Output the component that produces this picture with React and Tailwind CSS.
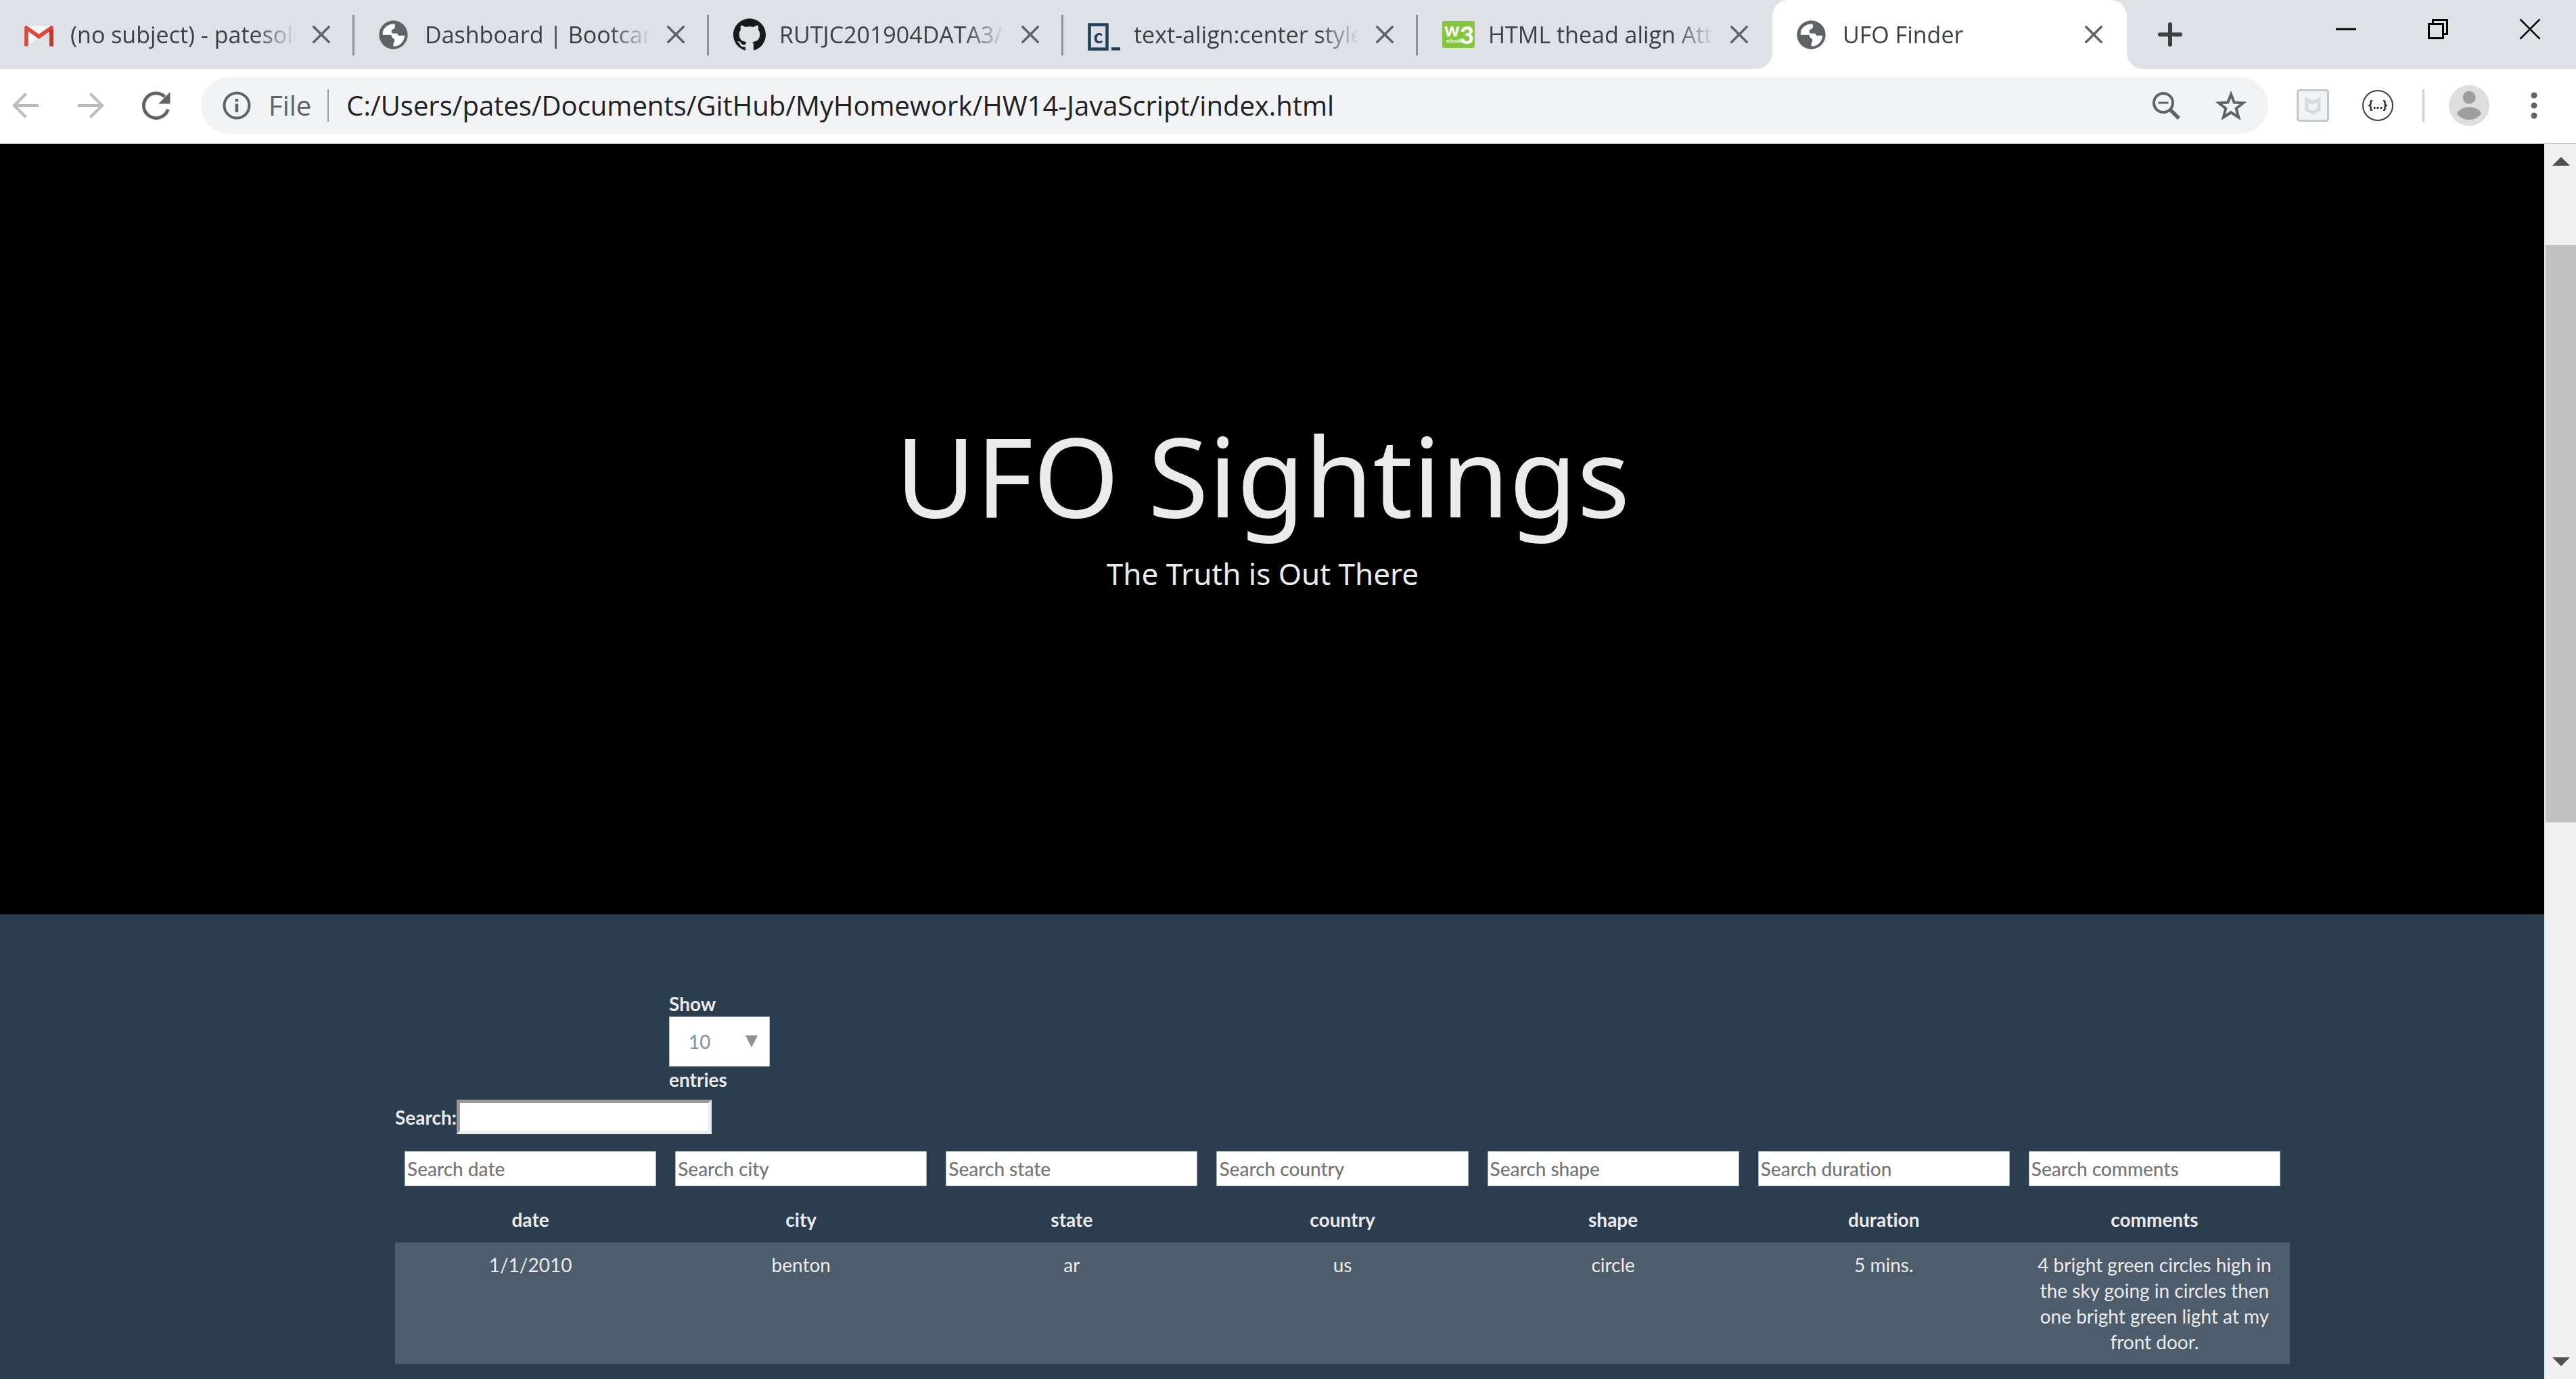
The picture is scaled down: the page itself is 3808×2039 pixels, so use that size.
import { SiGithub } from "react-icons/si";

function GmailIcon() {
  return (
    <svg viewBox="42 36 130 130" className="size-[43px]" aria-hidden="true">
      <rect x="52" y="60" width="110" height="92" rx="6" fill="#f3f4f4" />
      <path d="M58 152 107 112l48 40z" fill="#dfe1e2" />
      <path d="M107 112 160 152V78z" fill="#d3d6d8" opacity=".7" />
      <path d="M51 152V69l56 40 56-40v83" fill="none" stroke="#d9483b" strokeWidth="17" strokeLinejoin="round" />
      <path d="M163 78v74" stroke="#c0392d" strokeWidth="17" />
    </svg>
  );
}

function GlobeIcon() {
  return (
    <svg viewBox="36 39 128 128" className="size-[43px]" aria-hidden="true">
      <circle cx="100" cy="103" r="63" fill="#5f6368" />
      <path
        d="M106 56L108 66Q106 80 92 80L92 90Q92 97 100 97L114 97Q122 98 122 107L150 106Q148 130 130 145Q118 155 100 153L100 139Q106 137 105 132L105 122Q95 120 91 104L53 104Q50 80 70 65Q86 54 106 56Z"
        fill="#fff"
      />
    </svg>
  );
}

function CodecademyIcon() {
  return (
    <svg viewBox="0 0 48 48" className="size-12" aria-hidden="true">
      <rect x="2.5" y="9.500" width="26" height="36" fill="#dcdfe6" stroke="#1f4156" strokeWidth="4.500" />
      <text x="15.500" y="37" textAnchor="middle" fontFamily="Lato" fontWeight="900" fontSize="28" fill="#1f4156">c</text>
      <rect x="35" y="43" width="13" height="4.500" fill="#1f4156" />
    </svg>
  );
}

function W3Icon() {
  return (
    <svg viewBox="0 0 48 48" className="size-12" aria-hidden="true">
      <rect y="4" width="48" height="40" rx="3" fill="#86c63f" />
      <text x="3" y="27" fontFamily="Lato" fontWeight="900" fontSize="28" fill="#fff">w</text>
      <text x="26" y="38" fontFamily="Lato" fontWeight="900" fontSize="36" fill="#fff">3</text>
      <text x="6" y="36" fontFamily="Lato" fontWeight="700" fontSize="7" fill="#fff">schools</text>
    </svg>
  );
}

function Cross({ className, width }) {
  return (
    <svg viewBox="0 0 30 30" className={className} fill="none" stroke="currentColor" strokeWidth={width} aria-hidden="true">
      <path d="M2 2l26 26M28 2L2 28" strokeLinecap="round" />
    </svg>
  );
}

const tabs = [
  { title: "(no subject) - patesolo@gmail.com", icon: <GmailIcon /> },
  { title: "Dashboard | Bootcamp Spot", icon: <GlobeIcon /> },
  { title: "RUTJC201904DATA3/Homework", icon: <SiGithub className="size-12 text-[#171a1d]" /> },
  { title: "text-align:center style", icon: <CodecademyIcon /> },
  { title: "HTML thead align Attribute", icon: <W3Icon /> },
  { title: "UFO Finder", icon: <GlobeIcon />, active: true },
];

function Tab({ tab, divider }) {
  return (
    <div
      className={
        tab.active
          ? "relative flex h-full max-w-[524px] min-w-0 flex-1 items-center rounded-t-3xl bg-white pr-9 pl-9"
          : "relative flex h-full max-w-[524px] min-w-0 flex-1 items-center pr-9 pl-9"
      }
    >
      {tab.active && (
        <>
          <svg viewBox="0 0 24 24" className="absolute bottom-0 -left-6 size-6" aria-hidden="true">
            <path d="M24 0v24H0A24 24 0 0 0 24 0z" fill="#fff" />
          </svg>
          <svg viewBox="0 0 24 24" className="absolute -right-6 bottom-0 size-6" aria-hidden="true">
            <path d="M0 0v24h24A24 24 0 0 1 0 0z" fill="#fff" />
          </svg>
        </>
      )}
      <span className="flex w-12 shrink-0">{tab.icon}</span>
      <a
        href="#page"
        className="ml-5 min-w-0 flex-1 overflow-hidden text-[34px] leading-[48px] whitespace-nowrap text-[#3c4043] [mask-image:linear-gradient(to_right,#000_calc(100%-60px),transparent)]"
      >
        {tab.title}
      </a>
      <button aria-label={`Close ${tab.title}`} className="ml-6 shrink-0 text-[#5f6368]">
        <Cross className="size-[26px]" width="4" />
      </button>
      {divider && <span className="absolute top-[22px] right-0 h-[60px] w-[3px] bg-[#8d9196]" />}
    </div>
  );
}

function TabStrip() {
  return (
    <header className="flex h-[102px] shrink-0 bg-[#dee1e6]">
      <nav aria-label="Tabs" className="flex min-w-0 flex-1">
        {tabs.map((tab, i) => (
          <Tab key={tab.title} tab={tab} divider={i < 4} />
        ))}
        <button aria-label="New tab" className="ml-11 text-[#3c4043]">
          <svg viewBox="0 0 40 40" className="size-10" stroke="currentColor" strokeWidth="6" strokeLinecap="round" aria-hidden="true">
            <path d="M20 5v30M5 20h30" />
          </svg>
        </button>
      </nav>
      <div className="flex h-[86px] shrink-0 text-black">
        <button aria-label="Minimize" className="flex w-[136px] items-center justify-center">
          <svg viewBox="0 0 30 30" className="size-[30px]" aria-hidden="true">
            <path d="M0 15h30" stroke="currentColor" strokeWidth="3" />
          </svg>
        </button>
        <button aria-label="Restore" className="flex w-[136px] items-center justify-center">
          <svg viewBox="0 0 30 30" className="size-[30px]" fill="none" stroke="currentColor" strokeWidth="3" aria-hidden="true">
            <path d="M1.500 7.500h21v21h-21zM7.500 7.500v-6h21v21h-6" />
          </svg>
        </button>
        <button aria-label="Close window" className="flex w-[136px] items-center justify-center">
          <Cross className="size-[32px]" width="2.5" />
        </button>
      </div>
    </header>
  );
}

function Toolbar() {
  return (
    <div className="flex h-[111px] shrink-0 items-center border-b border-[#b4b4b4] bg-white pb-0.5 text-[#5f6368]">
      <div className="flex shrink-0 items-center gap-14 pr-[45px] pl-[18px]">
        <button aria-label="Back" className="text-[#bbbcbe]">
          <svg viewBox="0 0 40 40" className="size-10" fill="none" stroke="currentColor" strokeWidth="4" aria-hidden="true">
            <path d="M39 20H3M20.500 2.500L3 20l17.500 17.500" />
          </svg>
        </button>
        <button aria-label="Forward" className="text-[#bbbcbe]">
          <svg viewBox="0 0 40 40" className="size-10" fill="none" stroke="currentColor" strokeWidth="4" aria-hidden="true">
            <path d="M1 20h36M19.500 2.500L37 20 19.500 37.500" />
          </svg>
        </button>
        <button aria-label="Reload">
          <svg viewBox="0 0 40 40" className="size-[42px]" aria-hidden="true">
            <path d="M36.500 25.500A17.500 17.500 0 1 1 32 7.600" fill="none" stroke="currentColor" strokeWidth="4.500" />
            <path d="M39.500 1v16.500H23z" fill="currentColor" />
          </svg>
        </button>
      </div>
      <div className="flex h-[84px] min-w-0 flex-1 items-center rounded-full bg-[#f1f3f4] pr-8 pl-8 text-[40px] leading-[60px]">
        <svg viewBox="0 0 42 42" className="size-[42px] shrink-0" aria-hidden="true">
          <circle cx="21" cy="21" r="18.500" fill="none" stroke="currentColor" strokeWidth="4" />
          <path d="M21 18.500v12.500M21 11v4.500" stroke="currentColor" strokeWidth="4.500" />
        </svg>
        <span className="ml-[26px]">File</span>
        <span className="ml-6 h-12 w-[2px] shrink-0 bg-[#9aa0a6]" />
        <input
          aria-label="Address"
          defaultValue="C:/Users/pates/Documents/GitHub/MyHomework/HW14-JavaScript/index.html"
          className="ml-[26px] min-w-0 flex-1 bg-transparent text-[#202124] outline-none"
        />
        <button aria-label="Zoom" className="mr-[52px] shrink-0">
          <svg viewBox="0 0 42 42" className="size-[42px]" fill="none" stroke="currentColor" strokeWidth="4" aria-hidden="true">
            <circle cx="17" cy="17" r="14" />
            <path d="M9.500 17h15" strokeWidth="3" />
            <path d="M27 27l13 13" strokeWidth="5.500" />
          </svg>
        </button>
        <button aria-label="Bookmark this page" className="shrink-0">
          <svg viewBox="0 0 46 44" className="h-[44px] w-[46px]" fill="none" stroke="currentColor" strokeWidth="4" aria-hidden="true">
            <path d="M23 5.500l4.700 12 13.300.7-10.300 8.300 3.500 13L23 32.200 11.800 39.500l3.500-13L5 18.200l13.300-.7z" />
          </svg>
        </button>
      </div>
      <div className="flex shrink-0 items-center pr-10 pl-[42px]">
        <button aria-label="McAfee WebAdvisor">
          <svg viewBox="0 0 48 48" className="size-12" aria-hidden="true">
            <rect x="1.500" y="1.500" width="45" height="45" rx="3" fill="#f1f4f6" stroke="#c0c9ce" strokeWidth="3" />
            <path d="M15 15.500l9 4.500 9-4.500v14.500l-9 5-9-5z" fill="none" stroke="#d6dbde" strokeWidth="5" />
          </svg>
        </button>
        <button aria-label="JSON formatter" className="ml-12">
          <svg viewBox="0 0 48 48" className="size-12" aria-hidden="true">
            <circle cx="24" cy="24" r="22" fill="#fff" stroke="#3c3c3c" strokeWidth="2" />
            <text x="24" y="29" textAnchor="middle" fontFamily="Open Sans" fontWeight="700" fontSize="17" fill="#222">{"{...}"}</text>
          </svg>
        </button>
        <span className="ml-[42px] h-12 w-[3px] bg-[#cbcdcf]" />
        <button aria-label="Profile" className="ml-9">
          <svg viewBox="0 0 60 60" className="size-[60px]" aria-hidden="true">
            <circle cx="30" cy="30" r="30" fill="#dedede" />
            <circle cx="30" cy="18" r="9.500" fill="#9e9e9e" />
            <path d="M12 42C15 35 22 32.500 30 32.500S45 35 48 42C44 48 37 51 30 51S16 48 12 42z" fill="#9e9e9e" />
          </svg>
        </button>
        <button aria-label="Menu" className="ml-11">
          <svg viewBox="0 0 44 44" className="size-11" fill="currentColor" aria-hidden="true">
            <circle cx="22" cy="7" r="4.500" />
            <circle cx="22" cy="22" r="4.500" />
            <circle cx="22" cy="37" r="4.500" />
          </svg>
        </button>
      </div>
    </div>
  );
}

const columns = ["date", "city", "state", "country", "shape", "duration", "comments"];
const rows = [
  [
    "1/1/2010",
    "benton",
    "ar",
    "us",
    "circle",
    "5 mins.",
    "4 bright green circles high in the sky going in circles then one bright green light at my front door.",
  ],
];

function Sightings() {
  return (
    <section className="flex-1 bg-[#2b3e50] pt-[113px] pr-94 pl-146 font-['Lato',sans-serif] text-[28px] leading-[38px] [font-variant-ligatures:none]">
      <div className="ml-[405px] flex flex-col items-start font-bold">
        <label htmlFor="length">Show</label>
        <div className="relative">
          <select
            id="length"
            defaultValue="10"
            className="block h-[74px] w-[149px] appearance-none border border-[#b9bec4] bg-white pl-7 font-medium text-[#8b939b]"
          >
            <option>10</option>
            <option>25</option>
            <option>50</option>
            <option>100</option>
          </select>
          <svg viewBox="0 0 18 18" className="pointer-events-none absolute top-7 right-[18px] size-[18px]" aria-hidden="true">
            <path d="M0 0h18L9 18z" fill="#8b939b" />
          </svg>
        </div>
        <label htmlFor="length">entries</label>
      </div>
      <div className="mt-[11px] flex items-center font-bold">
        <label htmlFor="search">Search:</label>
        <input
          id="search"
          type="search"
          className="h-[51px] w-[377px] border-[5px] border-t-[#999] border-r-[#ebeff2] border-b-[#ebeff2] border-l-[#999] bg-white text-[#333] outline-none"
        />
      </div>
      <table className="mt-[11px] w-full table-fixed border-collapse text-center">
        <thead>
          <tr>
            {columns.map((name) => (
              <td key={name} className="p-3.5">
                <input
                  aria-label={`Search ${name}`}
                  placeholder={`Search ${name}`}
                  className="block h-[52px] w-full border border-[#a9b0b6] bg-white px-[3px] font-medium text-[#333] outline-none placeholder:text-[#757575]"
                />
              </td>
            ))}
          </tr>
          <tr>
            {columns.map((name) => (
              <th key={name} scope="col" className="px-3.5 pt-4 pb-[15px] font-bold">
                {name}
              </th>
            ))}
          </tr>
        </thead>
        <tbody>
          {rows.map((row) => (
            <tr key={row[0]} className="bg-[#4e5d6c]">
              {row.map((value, i) => (
                <td key={columns[i]} className="p-3.5 align-top">
                  {value}
                </td>
              ))}
            </tr>
          ))}
        </tbody>
      </table>
    </section>
  );
}

function Scrollbar() {
  return (
    <aside className="flex w-[47px] shrink-0 flex-col bg-[#f0f0f0] pl-0.5">
      <button aria-label="Scroll up" className="flex h-[51px] items-center justify-center">
        <svg viewBox="0 0 26 13" className="h-[13px] w-[26px]" aria-hidden="true">
          <path d="M0 13h26L13 0z" fill="#505050" />
        </svg>
      </button>
      <div className="flex-1 pt-[98px]">
        <div className="h-[52.5%] bg-[#c1c1c1]" />
      </div>
      <button aria-label="Scroll down" className="flex h-[51px] items-center justify-center">
        <svg viewBox="0 0 26 13" className="h-[13px] w-[26px]" aria-hidden="true">
          <path d="M0 0h26L13 13z" fill="#505050" />
        </svg>
      </button>
    </aside>
  );
}

export default function App() {
  return (
    <div className="flex h-screen flex-col overflow-hidden font-['Open_Sans',sans-serif]">
      <TabStrip />
      <Toolbar />
      <div className="flex min-h-0 flex-1">
        <main id="page" className="flex min-w-0 flex-1 flex-col overflow-hidden bg-black font-['Noto_Sans',sans-serif] text-[#ebebeb]">
          <section className="h-[1139px] shrink-0 pt-[399px] pr-7 text-center">
            <h1 className="text-[163px] leading-[180px]">UFO Sightings</h1>
            <p className="mt-6 text-[44px] leading-[64px]">The Truth is Out There</p>
          </section>
          <Sightings />
        </main>
        <Scrollbar />
      </div>
    </div>
  );
}
